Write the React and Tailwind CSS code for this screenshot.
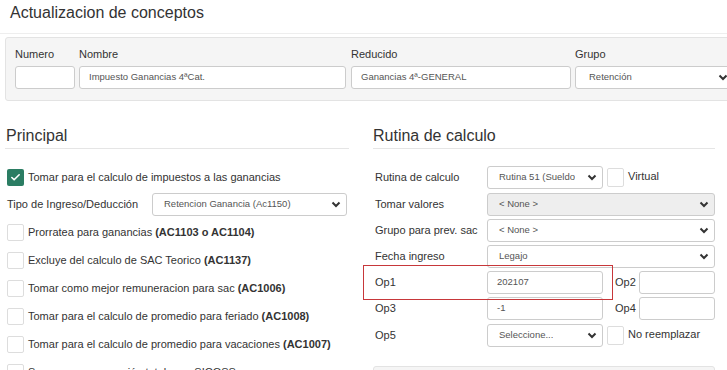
import { Check } from 'lucide-react'

const CHECKS = [
  { text: 'Prorratea para ganancias', code: '(AC1103 o AC1104)' },
  { text: 'Excluye del calculo de SAC Teorico', code: '(AC1137)' },
  { text: 'Tomar como mejor remuneracion para sac', code: '(AC1006)' },
  { text: 'Tomar para el calculo de promedio para feriado', code: '(AC1008)' },
  { text: 'Tomar para el calculo de promedio para vacaciones', code: '(AC1007)' },
  { text: 'Suma en remuneración total para SICOSS', code: '' },
]

function Chevron() {
  return (
    <svg width="10" height="7" viewBox="0 0 10 7" className="shrink-0">
      <path d="M1.5 1.5 L5 5 L8.5 1.5" fill="none" stroke="#333" strokeWidth="2" />
    </svg>
  )
}

function Select({ value, className = '', disabled }) {
  return (
    <div
      className={`flex items-center justify-between h-[23px] border border-[#ccc] rounded-[3px] pl-[11px] pr-[5px] text-[9.5px] text-[#555] ${
        disabled ? 'bg-[#eee]' : 'bg-white'
      } ${className}`}
    >
      <span className="truncate">{value}</span>
      <Chevron />
    </div>
  )
}

function Input({ value, className = '' }) {
  return (
    <div className={`flex items-center h-[23px] border border-[#ccc] rounded-[3px] bg-white pl-[9px] text-[9.5px] text-[#555] ${className}`}>
      {value}
    </div>
  )
}

function Box({ checked, className = '' }) {
  if (checked) {
    return (
      <div className={`flex items-center justify-center w-[17px] h-[17px] rounded-[2px] bg-[#2b7d63] shrink-0 ${className}`}>
        <Check size={11} strokeWidth={3.5} color="white" />
      </div>
    )
  }
  return <div className={`w-[17px] h-[17px] border border-[#ddd] rounded-[2px] bg-white shrink-0 ${className}`} />
}

function Row({ label, children, className = '' }) {
  return (
    <div className={`flex items-center ${className}`}>
      <span className="w-[114px] pl-[2px] shrink-0">{label}</span>
      {children}
    </div>
  )
}

export default function App() {
  return (
    <div className="relative w-[727px] h-[370px] overflow-hidden bg-white text-[#333] font-['Liberation_Sans',Arial,sans-serif]">
      <h1 className="h-[34px] pl-[10px] pt-[3px] text-[16px] leading-[20px] border-b border-[#eee]">
        Actualizacion de conceptos
      </h1>

      {/* Cabecera */}
      <div className="ml-[5px] mt-[3px] w-[760px] border border-[#e3e3e3] rounded-[3px] bg-[#f5f5f5] pl-[9px] pt-[8px] pb-[11px] text-[11px]">
        <div className="flex">
          <div className="w-[60px] mr-[4px]">
            <div className="leading-[16px] mb-[4px]">Numero</div>
            <Input value="" />
          </div>
          <div className="w-[267px] mr-[5px]">
            <div className="leading-[16px] mb-[4px]">Nombre</div>
            <Input value="Impuesto Ganancias 4ªCat." />
          </div>
          <div className="w-[220px] mr-[4px]">
            <div className="leading-[16px] mb-[4px]">Reducido</div>
            <Input value="Ganancias 4ª-GENERAL" />
          </div>
          <div className="w-[159px]">
            <div className="leading-[16px] mb-[4px]">Grupo</div>
            <Select value="Retención" className="pl-[13px]" />
          </div>
        </div>
      </div>

      <div className="flex gap-[24px] ml-[5px] mt-[25px] text-[11px]">
        {/* Principal */}
        <div className="w-[344px]">
          <h2 className="text-[16px] leading-[20px] pl-[1px] pb-[2px] border-b border-[#e5e5e5]">Principal</h2>
          <div className="mt-[14px]">
            <div className="flex items-center h-[28px] pl-[2px] gap-[4px]">
              <Box checked />
              <span>Tomar para el calculo de impuestos a las ganancias</span>
            </div>
            <div className="flex items-center h-[27px] pl-[2px]">
              <span className="w-[145px] shrink-0">Tipo de Ingreso/Deducción</span>
              <Select value="Retencion Ganancia (Ac1150)" className="w-[195px] pl-[10px]" />
            </div>
            {CHECKS.map(c => (
              <div key={c.text} className="flex items-center h-[28px] pl-[2px] gap-[4px]">
                <Box />
                <span>
                  {c.text} {c.code && <b>{c.code}</b>}
                </span>
              </div>
            ))}
          </div>
        </div>

        {/* Rutina de calculo */}
        <div className="w-[342px]">
          <h2 className="text-[16px] leading-[20px] pb-[2px] border-b border-[#e5e5e5]">Rutina de calculo</h2>
          <div className="flex flex-col gap-[3px] mt-[17px]">
            <Row label="Rutina de calculo">
              <Select value="Rutina 51 (Sueldo" className="w-[116px]" />
              <Box className="ml-[4px] h-[19px]" />
              <span className="ml-[4px] -mt-[2px]">Virtual</span>
            </Row>
            <Row label="Tomar valores" className="mt-[1px]">
              <Select value="< None >" disabled className="w-[229px]" />
            </Row>
            <Row label="Grupo para prev. sac">
              <Select value="< None >" className="w-[229px]" />
            </Row>
            <Row label="Fecha ingreso">
              <Select value="Legajo" className="w-[229px]" />
            </Row>
            <Row label="Op1">
              <Input value="202107" className="w-[116px]" />
              <span className="ml-[12px] w-[24px]">Op2</span>
              <Input value="" className="w-[76px]" />
            </Row>
            <Row label="Op3">
              <Input value="-1" className="w-[116px]" />
              <span className="ml-[12px] w-[24px]">Op4</span>
              <Input value="" className="w-[76px]" />
            </Row>
            <Row label="Op5" className="mt-[1px]">
              <Select value="Seleccione..." className="w-[116px]" />
              <Box className="ml-[4px] h-[19px]" />
              <span className="ml-[4px] -mt-[2px]">No reemplazar</span>
            </Row>
          </div>
          <div className="mt-[19px] h-[40px] border border-[#e3e3e3] rounded-[3px] bg-[#f5f5f5]" />
        </div>
      </div>

      {/* Marca de revisión */}
      <div className="absolute left-[363px] top-[265px] w-[250px] h-[35px] border border-[#c7373a] pointer-events-none" />
    </div>
  )
}
